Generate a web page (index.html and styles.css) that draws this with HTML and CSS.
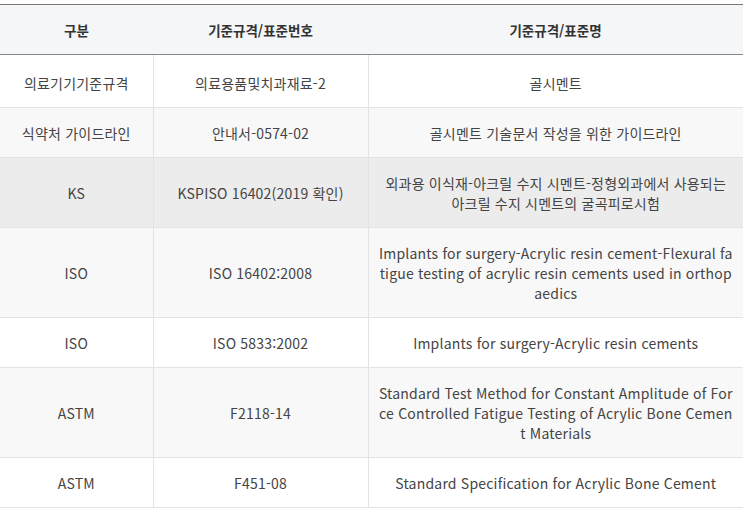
FILE: index.html
```html
<!DOCTYPE html>
<html lang="ko">
<head>
<meta charset="utf-8">
<link rel="stylesheet" href="styles.css">
</head>
<body>
<table class="std">
  <colgroup>
    <col class="c1">
    <col class="c2">
    <col class="c3">
  </colgroup>
  <thead>
    <tr><th>구분</th><th>기준규격/표준번호</th><th>기준규격/표준명</th></tr>
  </thead>
  <tbody>
    <tr class="first"><td>의료기기기준규격</td><td>의료용품및치과재료-2</td><td>골시멘트</td></tr>
    <tr class="alt"><td>식약처 가이드라인</td><td>안내서-0574-02</td><td>골시멘트 기술문서 작성을 위한 가이드라인</td></tr>
    <tr class="hover"><td>KS</td><td>KSPISO 16402(2019 확인)</td><td>외과용 이식재-아크릴 수지 시멘트-정형외과에서 사용되는 아크릴 수지 시멘트의 굴곡피로시험</td></tr>
    <tr class="alt"><td>ISO</td><td>ISO 16402:2008</td><td>Implants for surgery-Acrylic resin cement-Flexural fatigue testing of acrylic resin cements used in orthopaedics</td></tr>
    <tr><td>ISO</td><td>ISO 5833:2002</td><td>Implants for surgery-Acrylic resin cements</td></tr>
    <tr class="alt"><td>ASTM</td><td>F2118-14</td><td>Standard Test Method for Constant Amplitude of Force Controlled Fatigue Testing of Acrylic Bone Cement Materials</td></tr>
    <tr><td>ASTM</td><td>F451-08</td><td>Standard Specification for Acrylic Bone Cement</td></tr>
  </tbody>
</table>
</body>
</html>
```
FILE: styles.css
```css
html, body {
  margin: 0;
  padding: 0;
  background: #ffffff;
}
body {
  padding-top: 4px;
  font-family: "Noto Sans CJK KR", "Noto Sans", sans-serif;
  color: #444;
}
.std {
  width: 743px;
  border-collapse: collapse;
  table-layout: fixed;
  border-top: 1px solid #777;
  border-bottom: 1px solid #ddd;
}
.c1 { width: 153px; }
.c2 { width: 215px; }
.c3 { width: 375px; }
.std th {
  background: #f5f6f8;
  height: 49px;
  padding: 0 10px;
  font-size: 13.5px;
  font-weight: bold;
  color: #333;
  border-bottom: 1px solid #888;
  text-align: center;
  vertical-align: middle;
}
.std td {
  padding: 15px 9px 14px;
  font-size: 14px;
  letter-spacing: 0.2px;
  line-height: 20px;
  text-align: center;
  vertical-align: middle;
  border-bottom: 1px solid #e3e3e3;
  border-left: 1px solid #e3e3e3;
  word-break: break-all;
}
.std td:first-child { border-left: none; }
.std tr.first td { padding-top: 18px; }
.std tr.alt td { background: #f8f8f8; }
.std tr.hover td { background: #ececec; }
```
